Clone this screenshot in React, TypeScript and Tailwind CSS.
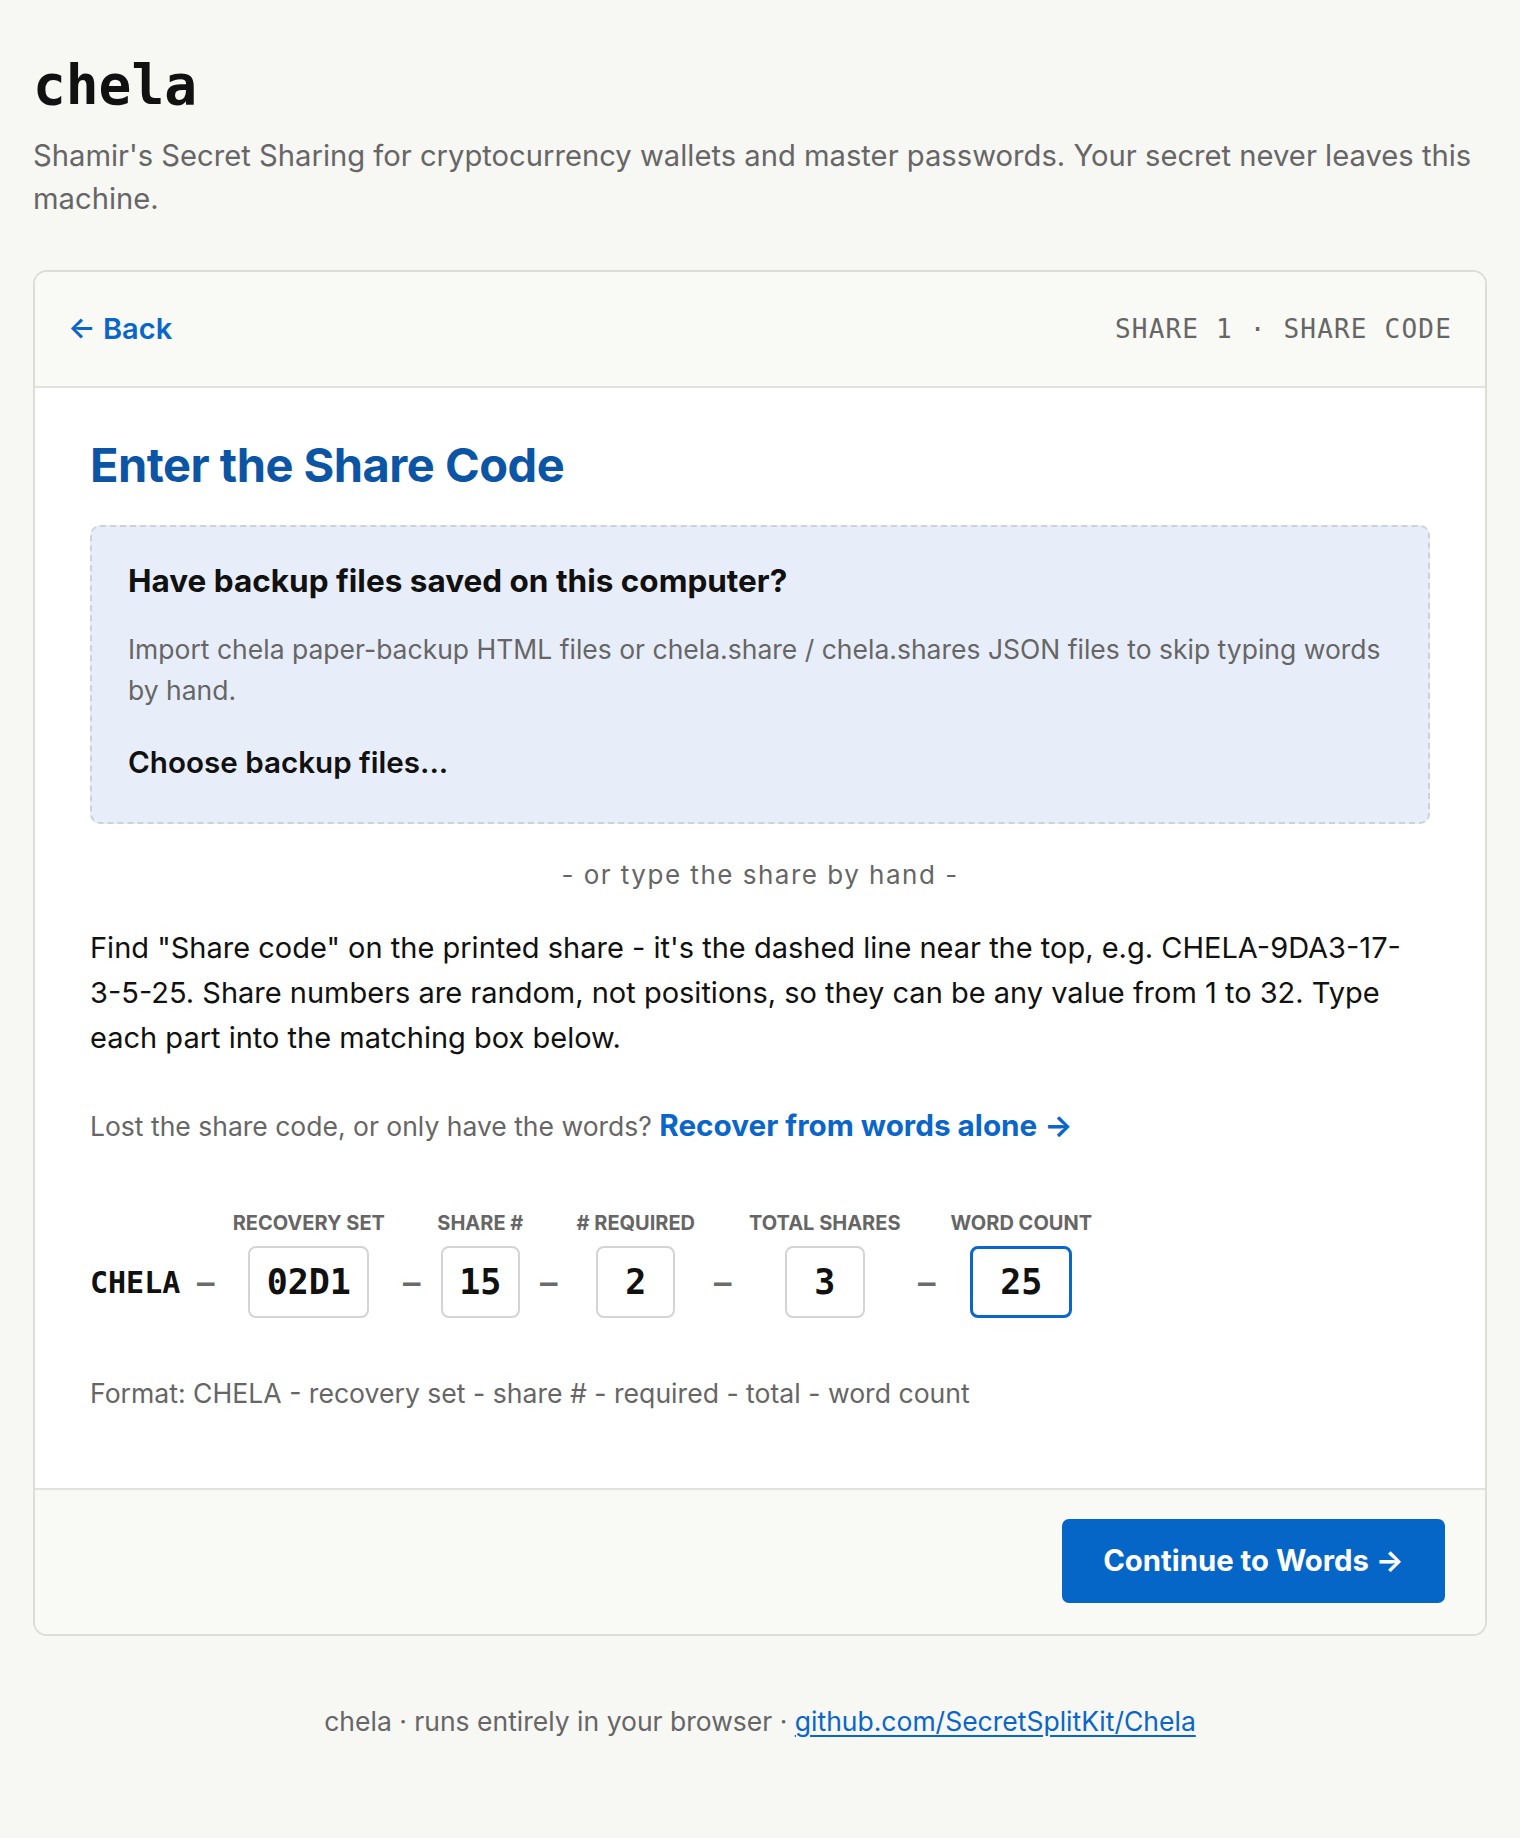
import React from "react";

const mono = "font-['DejaVu_Sans_Mono','Liberation_Mono',monospace]";

const fields = [
  { label: "RECOVERY SET", value: "02D1", col: "w-[155px]", box: "w-[121px]", active: false },
  { label: "SHARE #", value: "15", col: "w-[86px]", box: "w-[79px]", active: false },
  { label: "# REQUIRED", value: "2", col: "w-[123px]", box: "w-[79px]", active: false },
  { label: "TOTAL SHARES", value: "3", col: "w-[153px]", box: "w-[80px]", active: false },
  { label: "WORD COUNT", value: "25", col: "w-[138px]", box: "w-[102px]", active: true },
];

function Dash() {
  return (
    <div className={`w-[17px] h-[71px] flex items-center justify-center text-[29px] font-bold text-[#6b6b6b] ${mono}`}>–</div>
  );
}

export default function App() {
  return (
    <div className="min-h-screen bg-[#f7f7f4] font-['Inter',sans-serif] text-[#111]">
      <div className="px-[33px] pt-[52px] pb-[100px]">
        <h1 className={`text-[54.5px] leading-[67px] font-bold text-[#111] ${mono}`}>chela</h1>
        <p className="mt-[15px] text-[29.2px] leading-[43px] text-[#666]">
          Shamir's Secret Sharing for cryptocurrency wallets and master passwords. Your secret never leaves this machine.
        </p>

        <div className="mt-[50px] rounded-[14px] border-2 border-[#dcdcd8] bg-white overflow-hidden">
          <div className="h-[116px] px-[33px] flex items-center justify-between bg-[#f9f9f6] border-b-2 border-[#e2e2de]">
            <a className="text-[29px] font-semibold text-[#0a66c9]">← Back</a>
            <span className={`text-[26px] tracking-[1.2px] text-[#666] ${mono}`}>SHARE 1 · SHARE CODE</span>
          </div>

          <div className="px-[55px] pt-[48px] pb-[75px]">
            <h2 className="text-[47px] leading-[58px] font-bold text-[#0c55a5] tracking-[-0.5px]">Enter the Share Code</h2>

            <div className="mt-[31px] rounded-[10px] border-2 border-dashed border-[#cdd2da] bg-[#e8eef9] px-[36px] pt-[34px] pb-[40px]">
              <h3 className="text-[31.5px] leading-[40px] font-bold text-[#111]">Have backup files saved on this computer?</h3>
              <p className="mt-[28px] text-[26.5px] leading-[41px] text-[#666]">
                Import chela paper-backup HTML files or chela.share / chela.shares JSON files to skip typing words by hand.
              </p>
              <button className="mt-[31px] block text-[29.6px] leading-[40px] font-semibold text-[#111]">Choose backup files...</button>
            </div>

            <p className="mt-[31px] text-center text-[26px] leading-[40px] tracking-[1.5px] text-[#666]">- or type the share by hand -</p>

            <p className="mt-[30px] text-[29px] leading-[45px] text-[#111]">
              Find "Share code" on the printed share - it's the dashed line near the top, e.g. CHELA-9DA3-17-3-5-25. Share numbers are random, not positions, so they can be any value from 1 to 32. Type each part into the matching box below.
            </p>

            <p className="mt-[44px] text-[26.5px] leading-[42px] text-[#666]">
              Lost the share code, or only have the words?{" "}
              <a className="text-[29.7px] font-bold text-[#0a66c9]">Recover from words alone →</a>
            </p>

            <div className="mt-[63px] flex items-end gap-[17px]">
              <div className={`h-[71px] flex items-center text-[30px] font-bold text-[#111] ${mono}`}>CHELA</div>
              <Dash />
              {fields.map((f, i) => (
                <React.Fragment key={f.label}>
                  {i > 0 && <Dash />}
                  <div className={`${f.col} flex flex-col items-center`}>
                    <span className="text-[20px] leading-[26px] font-bold text-[#666] whitespace-nowrap">{f.label}</span>
                    <input
                      readOnly
                      value={f.value}
                      className={`mt-[10px] h-[72px] ${f.box} rounded-[8px] bg-white text-center text-[35px] font-bold text-[#111] outline-none ${mono} ${
                        f.active ? "border-[3px] border-[#0a66c9]" : "border-2 border-[#d4d4d4]"
                      }`}
                    />
                  </div>
                </React.Fragment>
              ))}
            </div>

            <p className="mt-[55px] text-[26.6px] leading-[40px] text-[#666]">
              Format: CHELA - recovery set - share # - required - total - word count
            </p>
          </div>

          <div className="border-t-2 border-[#e2e2de] bg-[#f9f9f6] px-[40px] pt-[29px] pb-[31px] flex justify-end">
            <button className="h-[84px] w-[383px] rounded-[7px] bg-[#0566c8] text-[29.3px] font-bold text-white">
              Continue to Words →
            </button>
          </div>
        </div>

        <p className="mt-[65px] text-center text-[26.5px] leading-[40px] text-[#666]">
          chela · runs entirely in your browser ·{" "}
          <a className="text-[#0a66c9] underline underline-offset-[4px]">github.com/SecretSplitKit/Chela</a>
        </p>
      </div>
    </div>
  );
}
